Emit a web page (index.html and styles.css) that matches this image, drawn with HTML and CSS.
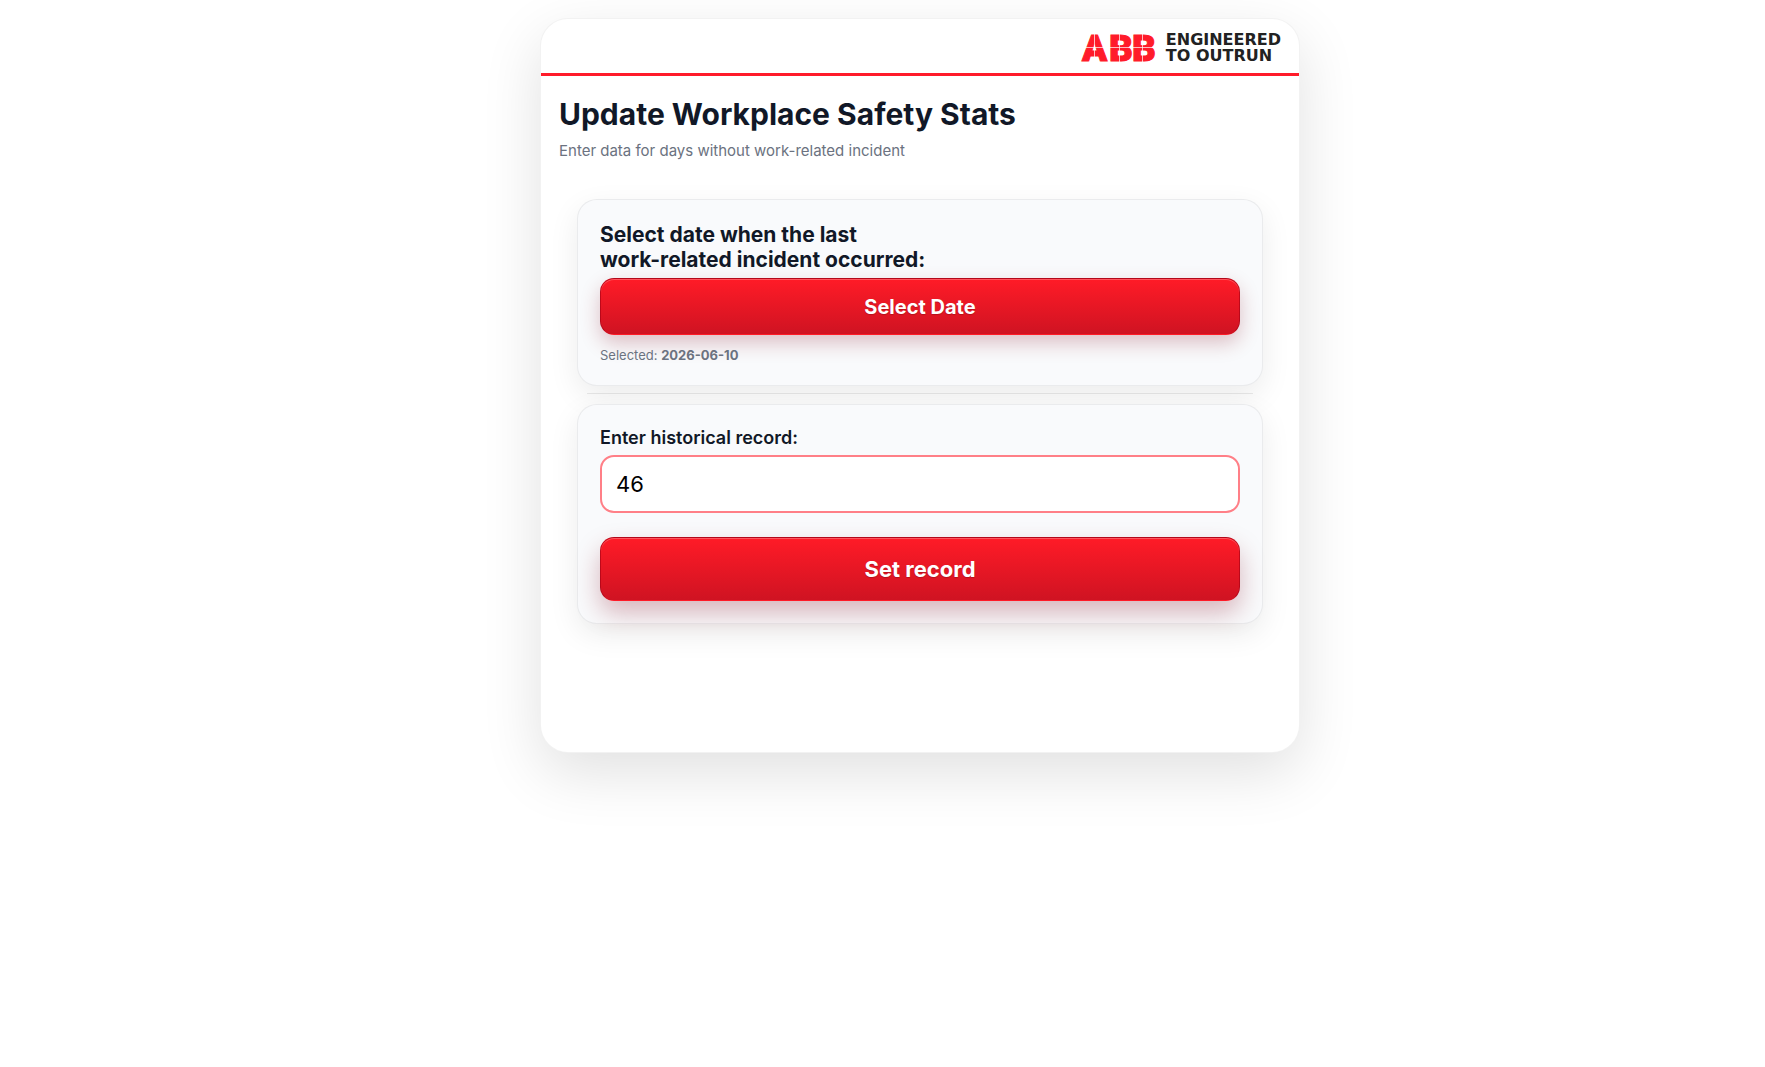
FILE: index.html
```
<!DOCTYPE html>
<html lang="en">
<head>
  <meta charset="UTF-8">
  <meta name="viewport" content="width=device-width, initial-scale=1.0">
  <title>Update Workplace Safety Stats</title>
  <link rel="stylesheet" href="styles.css">
</head>
<body>
  <main class="card">
    <!-- Brand bar -->
    <header class="topbar">
      <svg class="logo" width="77" height="50" viewBox="0 0 77 50" role="img" aria-label="ABB">
        <text class="logo-text" x="1 28 51" y="39.500">ABB</text>
        <path class="logo-cut" d="M0 26.500H77M13.500 10V42M38.500 10V42M61.500 10V42"/>
      </svg>
      <div class="tagline">ENGINEERED<br>TO OUTRUN</div>
    </header>

    <div class="intro">
      <h1 class="title">Update Workplace Safety Stats</h1>
      <p class="subtitle">Enter data for days without work-related incident</p>
    </div>

    <div class="content">
      <!-- Incident date -->
      <section class="panel">
        <h2 class="panel-title">Select date when the last<br>work-related incident occurred:</h2>
        <button class="button" type="button">Select Date</button>
        <p class="selected">Selected: <strong>2026-06-10</strong></p>
      </section>

      <hr class="divider">

      <!-- Historical record -->
      <form class="panel">
        <label class="label" for="record">Enter historical record:</label>
        <input class="input" id="record" type="text" inputmode="numeric" value="46">
        <button class="button button-large" type="button">Set record</button>
      </form>
    </div>
  </main>
</body>
</html>
```
FILE: styles.css
```
* {
  margin: 0;
  padding: 0;
  box-sizing: border-box;
  font-family: Inter, 'Liberation Sans', sans-serif;
}

body {
  min-height: 100vh;
  padding: 18px 0 18px 75px;
  background: #fff;
  color: #111827;
}

.card {
  width: 100%;
  max-width: 760px;
  margin: 0 auto;
  padding-bottom: 128px;
  background: #fff;
  border: 1px solid rgba(0, 0, 0, 0.05);
  border-radius: 28px;
  overflow: hidden;
  box-shadow: 0 20px 60px rgba(0, 0, 0, 0.12);
}

.topbar {
  display: flex;
  justify-content: flex-end;
  align-items: center;
  gap: 8px;
  height: 57px;
  padding: 0 18px;
  border-bottom: 3px solid #ff1b2a;
}

.logo {
  overflow: visible;
}

.logo-text {
  font-family: Roboto, sans-serif;
  font-size: 37px;
  font-weight: 900;
  fill: #ff1b2a;
  stroke: #ff1b2a;
  stroke-width: 1;
}

.logo-cut {
  stroke: rgba(255, 255, 255, 0.7);
  stroke-width: 1;
}

.tagline {
  padding-top: 3px;
  font-family: 'DejaVu Sans', sans-serif;
  font-size: 16px;
  font-weight: bold;
  line-height: 16px;
  color: #222;
}

.intro {
  padding: 18px 18px 0;
}

.title {
  font-size: 30px;
  font-weight: 700;
  line-height: 40px;
}

.subtitle {
  margin-top: 7px;
  font-size: 15px;
  line-height: 20px;
  color: #6b7280;
}

.content {
  padding: 38px 36px 0;
}

.panel {
  display: flex;
  flex-direction: column;
  padding: 22px;
  background: #f9fafc;
  border: 1px solid rgba(0, 0, 0, 0.06);
  border-radius: 20px;
  box-shadow: 0 10px 30px rgba(0, 0, 0, 0.08);
}

.panel-title {
  margin-bottom: 6px;
  font-size: 21px;
  font-weight: 700;
  line-height: 25px;
}

.button {
  height: 57px;
  background: linear-gradient(180deg, #ff1b27, #cf1322);
  border: 1px solid rgba(160, 0, 20, 0.6);
  border-bottom-color: transparent;
  border-radius: 14px;
  box-shadow: 0 8px 20px rgba(130, 0, 20, 0.24), inset 0 1px 0 rgba(255, 255, 255, 0.25);
  color: #fff;
  font-size: 20px;
  font-weight: 700;
  text-shadow: 0 1px 1px rgba(0, 0, 0, 0.2);
  cursor: pointer;
}

.button-large {
  height: 64px;
  font-size: 22px;
  box-shadow: 0 12px 26px rgba(130, 0, 20, 0.28), inset 0 1px 0 rgba(255, 255, 255, 0.25);
}

.selected {
  margin-top: 12px;
  font-size: 13px;
  line-height: 16px;
  color: #6b7280;
}

.divider {
  margin: 7px 10px 10px;
  border: 0;
  border-top: 1px solid rgba(0, 0, 0, 0.08);
}

.label {
  margin-bottom: 6px;
  font-size: 18px;
  font-weight: 600;
  line-height: 22px;
}

.input {
  width: 100%;
  height: 58px;
  margin-bottom: 24px;
  padding: 0 14px;
  background: #fff;
  border: 2px solid #ff7f87;
  border-radius: 14px;
  color: #000;
  font-size: 22px;
}
```
